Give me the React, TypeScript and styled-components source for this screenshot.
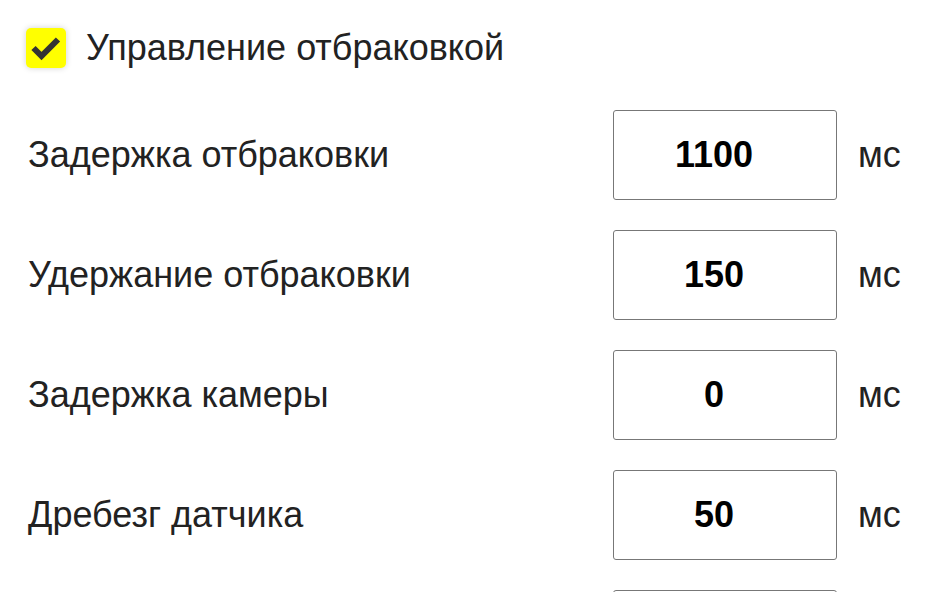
import React from "react";
import styled, { createGlobalStyle } from "styled-components";

const GlobalStyle = createGlobalStyle`
  html, body {
    margin: 0;
    padding: 0;
    background: #ffffff;
    font-family: "Liberation Sans", Arial, sans-serif;
    color: #222222;
  }
`;

const rows = [
  { label: "Задержка отбраковки", value: "1100" },
  { label: "Удержание отбраковки", value: "150" },
  { label: "Задержка камеры", value: "0" },
  { label: "Дребезг датчика", value: "50" },
];

export default function App() {
  return (
    <>
      <GlobalStyle />
      <Page>
        <Header>
          <CheckBox>
            <svg width="40" height="40" viewBox="0 0 40 40">
              <path
                d="M7.5 20 L15.5 28 L32 11.5"
                fill="none"
                stroke="#333333"
                strokeWidth="6"
              />
            </svg>
          </CheckBox>
          <Title>Управление отбраковкой</Title>
        </Header>
        <Rows>
          {rows.map((r) => (
            <Row key={r.label}>
              <Label>{r.label}</Label>
              <ValueBox>{r.value}</ValueBox>
              <Unit>мс</Unit>
            </Row>
          ))}
          <Row>
            <span />
            <ValueBox />
            <span />
          </Row>
        </Rows>
      </Page>
    </>
  );
}

const Page = styled.div`
  width: 929px;
  height: 592px;
  overflow: hidden;
  box-sizing: border-box;
  padding: 28px 0 0 26px;
`;

const Header = styled.div`
  display: flex;
  align-items: center;
  gap: 20px;
  height: 40px;
`;

const CheckBox = styled.div`
  flex: none;
  width: 40px;
  height: 40px;
  border-radius: 5px;
  background: #ffff00;
  box-shadow: 0 0 6px rgba(0, 0, 0, 0.18);
  svg {
    display: block;
  }
`;

const Title = styled.span`
  font-size: 36px;
  line-height: 40px;
  color: #222222;
`;

const Rows = styled.div`
  display: flex;
  flex-direction: column;
  gap: 30px;
  margin-top: 42px;
  padding-left: 2px;
`;

const Row = styled.div`
  display: grid;
  grid-template-columns: 564px 224px auto;
  column-gap: 21px;
  align-items: center;
  height: 90px;
`;

const Label = styled.span`
  font-size: 36px;
  color: #222222;
`;

const ValueBox = styled.div`
  height: 90px;
  box-sizing: border-box;
  border: 1px solid #777777;
  border-radius: 3px;
  padding-right: 22px;
  display: flex;
  align-items: center;
  justify-content: center;
  font-size: 36px;
  font-weight: bold;
  color: #000000;
`;

const Unit = styled.span`
  font-size: 36px;
  color: #222222;
`;
